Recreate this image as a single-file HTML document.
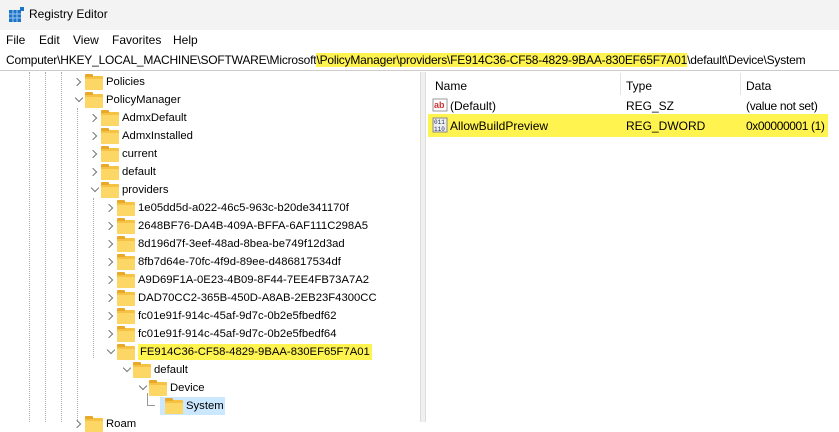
<!DOCTYPE html><html><head><meta charset="utf-8"><style>
*{margin:0;padding:0;box-sizing:border-box}
body{width:839px;height:422px;overflow:hidden;background:#fff;font-family:"Liberation Sans",sans-serif;font-size:12px;color:#000;position:relative}
.a{position:absolute;white-space:nowrap}
.t{font-size:11.3px}
.f{position:absolute;width:18px;height:14px;background:#f6c244;border-radius:1px}
.f::before{content:"";position:absolute;left:0;top:-2px;width:8px;height:3px;background:#e8a92a;border-radius:1px 1px 0 0}
.f::after{content:"";position:absolute;left:0;top:3px;width:18px;height:11px;background:#fcd766;border-radius:1px}
.c{position:absolute;width:6px;height:6px;border-right:1.2px solid #777;border-bottom:1.2px solid #777}
.r{transform:rotate(-45deg)}
.d{transform:rotate(45deg)}
.vl{position:absolute;width:0;border-left:1px dotted #aaa}
.y{background:#fff34f}
</style></head><body>
<div class="a" style="left:0;top:0;width:839px;height:30px;background:#f3f3f3"></div>
<svg class="a" style="left:8px;top:6px" width="18" height="18" viewBox="0 0 18 18"><rect x="1" y="4" width="12" height="12" fill="#1e74c8"/><path d="M1 8h12M1 12h12M5 4v12M9 4v12" stroke="#9cc8f0" stroke-width="1"/><rect x="12" y="1" width="4" height="4" fill="#1e74c8"/></svg>
<div class="a" style="left:29px;top:7px;font-size:12px">Registry Editor</div>
<div class="a" style="left:6px;top:33px">File</div><div class="a" style="left:39px;top:33px">Edit</div><div class="a" style="left:73px;top:33px">View</div><div class="a" style="left:112px;top:33px">Favorites</div><div class="a" style="left:173px;top:33px">Help</div>
<div class="a" style="left:0;top:50px;width:839px;height:21px;border-bottom:1px solid #ccc"></div>
<div class="a" style="left:6px;top:51px;line-height:19px;letter-spacing:-0.2px">Computer\HKEY_LOCAL_MACHINE\SOFTWARE\Microsoft<span class="y">\PolicyManager\providers\FE914C36-CF58-4829-9BAA-830EF65F7A01</span>\default\Device\System</div>
<div class="a" style="left:420px;top:72px;width:6px;height:350px;background:#f0f0f0;border-left:1px solid #ddd;border-right:1px solid #ddd"></div>
<div class="vl" style="left:29px;top:72px;height:350px"></div>
<div class="vl" style="left:45px;top:72px;height:350px"></div>
<div class="vl" style="left:61px;top:72px;height:350px"></div>
<div class="vl" style="left:77px;top:108px;height:314px"></div>
<div class="vl" style="left:93px;top:198px;height:160px"></div>
<div id="t"></div>
<div class="a" style="left:435px;top:79px">Name</div><div class="a" style="left:626px;top:79px">Type</div><div class="a" style="left:746px;top:79px">Data</div>
<div class="a" style="left:620px;top:73px;width:1px;height:22px;background:#e5e5e5"></div>
<div class="a" style="left:740px;top:73px;width:1px;height:22px;background:#e5e5e5"></div>
<div class="a" style="left:428px;top:114px;width:400px;height:23px;background:#fff34f"></div>
<svg class="a" style="left:432px;top:97px" width="16" height="16"><rect x="1" y="2" width="14" height="12" fill="#fff" stroke="#999"/><text x="2" y="11" font-size="9" font-weight="bold" fill="#c33" font-family="Liberation Sans">ab</text></svg>
<div class="a" style="left:450px;top:99px">(Default)</div><div class="a" style="left:626px;top:99px">REG_SZ</div><div class="a" style="left:746px;top:99px;letter-spacing:-0.3px">(value not set)</div>
<svg class="a" style="left:432px;top:117px" width="16" height="16"><rect x="1" y="1" width="14" height="14" fill="#eee" stroke="#888"/><text x="2" y="7" font-size="6" fill="#236" font-family="Liberation Mono">011</text><text x="2" y="14" font-size="6" fill="#236" font-family="Liberation Mono">110</text></svg>
<div class="a" style="left:450px;top:119px">AllowBuildPreview</div><div class="a" style="left:626px;top:119px">REG_DWORD</div><div class="a" style="left:746px;top:119px;letter-spacing:-0.4px">0x00000001 (1)</div>
<script>
var rows=[[0,'Policies','r'],[0,'PolicyManager','d'],[1,'AdmxDefault','r'],[1,'AdmxInstalled','r'],[1,'current','r'],[1,'default','r'],[1,'providers','d'],[2,'1e05dd5d-a022-46c5-963c-b20de341170f','r'],[2,'2648BF76-DA4B-409A-BFFA-6AF111C298A5','r'],[2,'8d196d7f-3eef-48ad-8bea-be749f12d3ad','r'],[2,'8fb7d64e-70fc-4f9d-89ee-d486817534df','r'],[2,'A9D69F1A-0E23-4B09-8F44-7EE4FB73A7A2','r'],[2,'DAD70CC2-365B-450D-A8AB-2EB23F4300CC','r'],[2,'fc01e91f-914c-45af-9d7c-0b2e5fbedf62','r'],[2,'fc01e91f-914c-45af-9d7c-0b2e5fbedf64','r'],[2,'FE914C36-CF58-4829-9BAA-830EF65F7A01','d','y'],[3,'default','d'],[4,'Device','d'],[5,'System','','s'],[0,'Roam','r']];
var h='';rows.forEach(function(r,i){var y=73+i*18,x=76+r[0]*16;
if(r[2]=='r')h+='<div class="c r" style="left:'+(x-2)+'px;top:'+(y+6)+'px"></div>';
if(r[2]=='d')h+='<div class="c d" style="left:'+(x)+'px;top:'+(y+4)+'px"></div>';
if(r[3]=='s'){h+='<div class="a" style="left:'+(x-9)+'px;top:'+(y-4)+'px;width:8px;height:13px;border-left:1px solid #999;border-bottom:1px solid #999"></div><div class="a" style="left:'+(x+4)+'px;top:'+y+'px;width:65px;height:18px;background:#cce8ff"></div>';}
h+='<div class="f" style="left:'+(x+9)+'px;top:'+(y+3)+'px"></div>';
var txt=r[3]=='y'?'<span class="y" style="padding:2px 2px 2px 2px">'+r[1]+'</span>':r[1];
h+='<div class="a t" style="left:'+(x+30)+'px;top:'+(y+3)+'px">'+txt+'</div>';});
document.getElementById('t').innerHTML=h;
</script>
</body></html>
